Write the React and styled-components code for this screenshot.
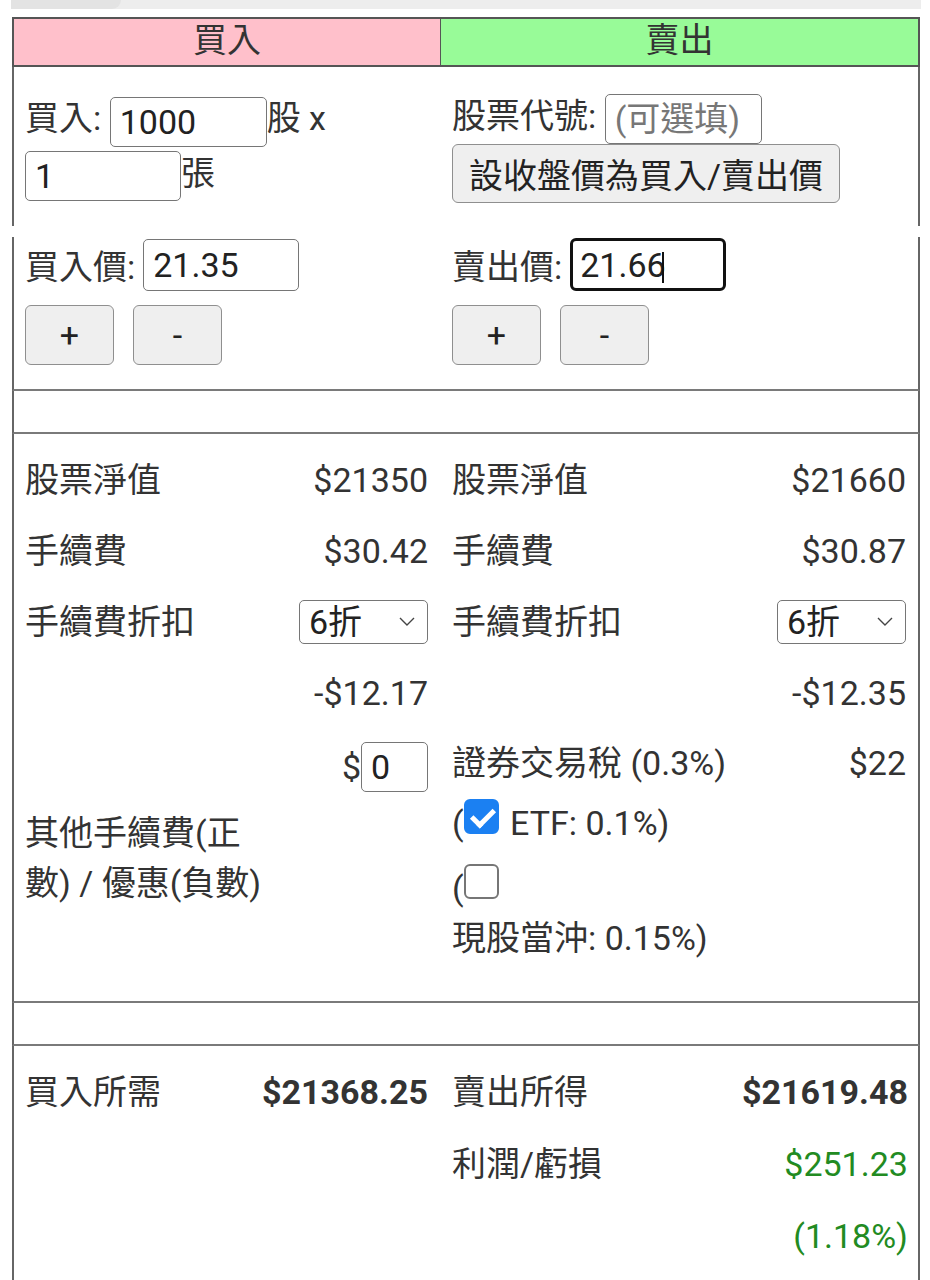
import React from "react";
import styled, { createGlobalStyle } from "styled-components";

const Global = createGlobalStyle`
  html, body { margin: 0; padding: 0; background: #fff; }
  body { font-family: Roboto, "Noto Sans CJK TC", sans-serif; }
`;

const Page = styled.div`
  width: 930px;
  box-sizing: border-box;
  padding: 0 10px 0 12px;
  font-family: Roboto, "Noto Sans CJK TC", sans-serif;
  font-size: 34px;
  color: #333;
`;

const TopStrip = styled.div`
  height: 9px;
  background: #ededed;
  margin: 0 -1px 8px -1px;
`;

const StripThumb = styled.div`
  width: 110px;
  height: 9px;
  background: #e3e3e3;
  border-radius: 0 0 40px 0;
`;

const Header = styled.div`
  display: grid;
  grid-template-columns: 426px 1fr;
  grid-template-rows: 46px;
  height: 50px;
  box-sizing: border-box;
  border: 2px solid #555;
`;

const HeaderCell = styled.div`
  background: ${(p) => p.$bg};
  display: flex;
  align-items: center;
  justify-content: center;
  line-height: 40px;
  padding-bottom: 4px;
  box-sizing: border-box;
  overflow: hidden;
  color: #333;
  & + & {
    border-left: 1.5px solid #555;
  }
`;

const Block = styled.div`
  box-sizing: border-box;
  border-left: 2px solid #666;
  border-right: 2px solid #666;
  border-bottom: ${(p) => (p.$open ? "none" : "2px solid #7a7a7a")};
  height: ${(p) => (p.$h ? `${p.$h}px` : "auto")};
`;

const Seam = styled.div`
  height: 11px;
`;

const TwoCols = styled.div`
  display: grid;
  grid-template-columns: 426px 1fr;
  height: 100%;
`;

const InputCell = styled.div`
  display: flex;
  align-items: ${(p) => (p.$top ? "flex-start" : "center")};
  flex-direction: ${(p) => (p.$top ? "column" : "row")};
  padding: ${(p) => (p.$top ? "1px" : "0")} 12px 0 ${(p) => (p.$side === "left" ? 11 : 12)}px;
`;

const Flow = styled.div`
  line-height: 52px;
`;

const TextField = styled.input`
  width: ${(p) => p.$w}px;
  height: ${(p) => p.$h || 50}px;
  box-sizing: border-box;
  border: ${(p) => (p.$focused ? "3px solid #111" : "1.5px solid #767676")};
  border-radius: ${(p) => (p.$focused ? 6 : 5)}px;
  padding: 0 0 0 ${(p) => (p.$focused ? 7 : 9)}px;
  margin: 0;
  font-family: Roboto, "Noto Sans CJK TC", sans-serif;
  font-size: 34px;
  color: #222;
  background: #fff;
  vertical-align: middle;
  outline: none;
  &::placeholder {
    color: #777;
  }
`;

const WideButton = styled.button`
  height: 59px;
  padding: 0 16px;
  margin: 0;
  box-sizing: border-box;
  background: #efefef;
  border: 1.5px solid #8f8f8f;
  border-radius: 6px;
  font-family: Roboto, "Noto Sans CJK TC", sans-serif;
  font-size: 34px;
  color: #222;
  vertical-align: middle;
`;

const PriceRow = styled.div`
  display: flex;
  align-items: center;
  gap: 8px;
  height: 53px;
`;

const FocusWrap = styled.span`
  position: relative;
  display: inline-flex;
`;

const Caret = styled.span`
  position: absolute;
  left: 92px;
  top: 14px;
  width: 2px;
  height: 31px;
  background: #111;
`;

const StepRow = styled.div`
  display: flex;
  gap: 19px;
  margin-top: 14px;
`;

const StepButton = styled.button`
  width: 89px;
  height: 60px;
  box-sizing: border-box;
  padding: 0;
  background: #efefef;
  border: 1.5px solid #8f8f8f;
  border-radius: 6px;
  font-family: Roboto, "Noto Sans CJK TC", sans-serif;
  font-size: 34px;
  color: #222;
`;

const FigureGrid = styled.div`
  display: grid;
  grid-template-columns: 251px 175px 302px 1fr;
  grid-auto-rows: minmax(${(p) => p.$row}px, auto);
  padding: 10px 0 ${(p) => p.$bottom}px;
`;

const Label = styled.div`
  display: flex;
  align-items: center;
  line-height: 50px;
  padding-left: ${(p) => (p.$side === "left" ? 11 : 12)}px;
`;

const Value = styled.div`
  display: flex;
  align-items: ${(p) => (p.$top ? "flex-start" : "center")};
  justify-content: flex-end;
  padding-right: 12px;
  padding-top: ${(p) => p.$top || 0}px;
  line-height: 50px;
  white-space: nowrap;
  font-weight: ${(p) => (p.$bold ? 700 : 400)};
  color: ${(p) => (p.$tone === "gain" ? "#228b22" : "#333")};
`;

const TaxCell = styled.div`
  line-height: 50px;
  padding: 10px 0 24px 12px;
`;

const OptionLine = styled.div`
  margin-top: ${(p) => p.$gap}px;
  line-height: 50px;
`;

const OptionText = styled.span`
  display: inline-block;
`;

const Check = styled.input.attrs({ type: "checkbox" })`
  appearance: none;
  -webkit-appearance: none;
  position: relative;
  width: 35px;
  height: 35px;
  box-sizing: border-box;
  margin: 0 3px 0 0;
  border: 2px solid #767676;
  border-radius: 6px;
  background: #fff;
  vertical-align: 1px;
  &:checked {
    background: #1b80f2;
    border-color: #1b80f2;
  }
  &:checked::after {
    content: "";
    position: absolute;
    left: 10px;
    top: 3px;
    width: 9px;
    height: 18px;
    border: solid #fff;
    border-width: 0 5px 5px 0;
    transform: rotate(45deg);
  }
`;

const MoneyInput = styled.span`
  display: inline-flex;
  align-items: center;
`;

const SelectWrap = styled.span`
  position: relative;
  display: inline-flex;
`;

const Select = styled.select`
  appearance: none;
  -webkit-appearance: none;
  width: 129px;
  height: 44px;
  box-sizing: border-box;
  margin: 0;
  padding: 0 0 0 9px;
  border: 1.5px solid #767676;
  border-radius: 5px;
  background: #fff;
  font-family: Roboto, "Noto Sans CJK TC", sans-serif;
  font-size: 34px;
  color: #222;
`;

const Chevron = styled.svg`
  position: absolute;
  right: 13px;
  top: 17px;
  width: 16px;
  height: 9px;
  pointer-events: none;
`;

function DiscountSelect() {
  return (
    <SelectWrap>
      <Select defaultValue="6">
        <option value="6">6折</option>
        <option value="10">無</option>
      </Select>
      <Chevron viewBox="0 0 16 9">
        <path d="M1 1 L8 8 L15 1" fill="none" stroke="#444" strokeWidth="1.4" />
      </Chevron>
    </SelectWrap>
  );
}

export default function App() {
  return (
    <Page>
      <Global />
      <TopStrip>
        <StripThumb />
      </TopStrip>

      <Header>
        <HeaderCell $bg="#ffc0cb">買入</HeaderCell>
        <HeaderCell $bg="#98fb98">賣出</HeaderCell>
      </Header>

      <Block $open $h={159}>
        <TwoCols>
          <InputCell $side="left">
            <Flow>
              買入: <TextField $w={157} defaultValue="1000" />股 x <TextField $w={156} defaultValue="1" />張
            </Flow>
          </InputCell>
          <InputCell $side="right">
            <Flow>
              股票代號: <TextField $w={157} placeholder="(可選填)" /> <WideButton>設收盤價為買入/賣出價</WideButton>
            </Flow>
          </InputCell>
        </TwoCols>
      </Block>

      <Seam />

      <Block $h={154}>
        <TwoCols>
          <InputCell $side="left" $top>
            <PriceRow>
              買入價:
              <TextField $w={156} $h={52} defaultValue="21.35" />
            </PriceRow>
            <StepRow>
              <StepButton>+</StepButton>
              <StepButton>-</StepButton>
            </StepRow>
          </InputCell>
          <InputCell $side="right" $top>
            <PriceRow>
              賣出價:
              <FocusWrap>
                <TextField $w={156} $h={53} $focused defaultValue="21.66" />
                <Caret />
              </FocusWrap>
            </PriceRow>
            <StepRow>
              <StepButton>+</StepButton>
              <StepButton>-</StepButton>
            </StepRow>
          </InputCell>
        </TwoCols>
      </Block>

      <Block $h={43} />

      <Block>
        <FigureGrid $row={71} $bottom={14}>
          <Label $side="left">股票淨值</Label>
          <Value>$21350</Value>
          <Label $side="right">股票淨值</Label>
          <Value>$21660</Value>

          <Label $side="left">手續費</Label>
          <Value>$30.42</Value>
          <Label $side="right">手續費</Label>
          <Value>$30.87</Value>

          <Label $side="left">手續費折扣</Label>
          <Value>
            <DiscountSelect />
          </Value>
          <Label $side="right">手續費折扣</Label>
          <Value>
            <DiscountSelect />
          </Value>

          <Label $side="left" />
          <Value>-$12.17</Value>
          <Label $side="right" />
          <Value>-$12.35</Value>

          <Label $side="left">其他手續費(正數) / 優惠(負數)</Label>
          <Value $top={14}>
            <MoneyInput>
              $<TextField $w={67} defaultValue="0" />
            </MoneyInput>
          </Value>
          <TaxCell>
            證券交易稅 (0.3%)
            <OptionLine $gap={10}>
              (<Check defaultChecked /> <OptionText>ETF: 0.1%)</OptionText>
            </OptionLine>
            <OptionLine $gap={15}>
              (<Check /> <OptionText>現股當沖: 0.15%)</OptionText>
            </OptionLine>
          </TaxCell>
          <Value $top={10}>$22</Value>
        </FigureGrid>
      </Block>

      <Block $h={43} />

      <Block>
        <FigureGrid $row={72} $bottom={30}>
          <Label $side="left">買入所需</Label>
          <Value $bold>$21368.25</Value>
          <Label $side="right">賣出所得</Label>
          <Value $bold>$21619.48</Value>

          <Label $side="left" />
          <Value />
          <Label $side="right">利潤/虧損</Label>
          <Value $tone="gain">$251.23</Value>

          <Label $side="left" />
          <Value />
          <Label $side="right" />
          <Value $tone="gain">(1.18%)</Value>
        </FigureGrid>
      </Block>
    </Page>
  );
}
